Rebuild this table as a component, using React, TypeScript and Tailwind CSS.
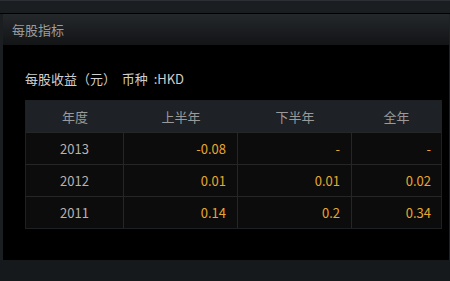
const rows = [
  { year: '2013', h1: '-0.08', h2: '-', full: '-' },
  { year: '2012', h1: '0.01', h2: '0.01', full: '0.02' },
  { year: '2011', h1: '0.14', h2: '0.2', full: '0.34' },
];

const font = { fontFamily: '"Noto Sans CJK SC", "Noto Sans", sans-serif' };

export default function App() {
  return (
    <div className="w-[450px] h-[281px] bg-black flex flex-col overflow-hidden" style={font}>
      {/* top strip */}
      <div className="h-[13px] bg-[#1b1e21] border-t border-[#2c3034]" />
      <div className="h-px bg-black" />

      <div className="flex-1 flex border-l-[3px] border-[#1b1e21] border-r border-r-[#1f2225]">
        <div className="flex-1 flex flex-col">
          {/* panel header */}
          <div className="h-[31px] bg-gradient-to-b from-[#25282b] to-[#121416] flex items-center pl-[9px] text-[13px] text-[#9c9c9c]">
            每股指标
          </div>

          {/* subtitle */}
          <div className="h-[55px] flex items-center pl-[22px] pt-[13px] text-[13px] text-[#cfcfcf]">
            每股收益（元）&nbsp;&nbsp;币种&nbsp;&nbsp;:HKD
          </div>

          {/* table */}
          <div className="ml-[22px] w-[417px] border border-[#1e2124]">
            <div className="flex h-[31px] bg-[#1e2226] text-[13px] text-[#9a9a9a]">
              <div className="w-[98px] flex items-center justify-center">年度</div>
              <div className="w-[114px] flex items-center justify-center">上半年</div>
              <div className="w-[114px] flex items-center justify-center">下半年</div>
              <div className="flex-1 flex items-center justify-center">全年</div>
            </div>
            {rows.map((r) => (
              <div key={r.year} className="flex h-[32px] bg-[#0c0c0c] border-t border-[#262626] text-[13px]">
                <div className="w-[98px] flex items-center justify-center text-[#b4b4b4] border-r border-[#262626]">
                  {r.year}
                </div>
                <div className="w-[114px] flex items-center justify-end pr-[11px] text-[#e8a830] border-r border-[#262626]">
                  {r.h1}
                </div>
                <div className="w-[114px] flex items-center justify-end pr-[11px] text-[#e8a830] border-r border-[#262626]">
                  {r.h2}
                </div>
                <div className="flex-1 flex items-center justify-end pr-[10px] text-[#e8a830]">
                  {r.full}
                </div>
              </div>
            ))}
          </div>
          <div className="flex-1" />
        </div>
      </div>

      {/* bottom bar */}
      <div className="h-[21px] bg-[#15191c]" />
    </div>
  );
}
